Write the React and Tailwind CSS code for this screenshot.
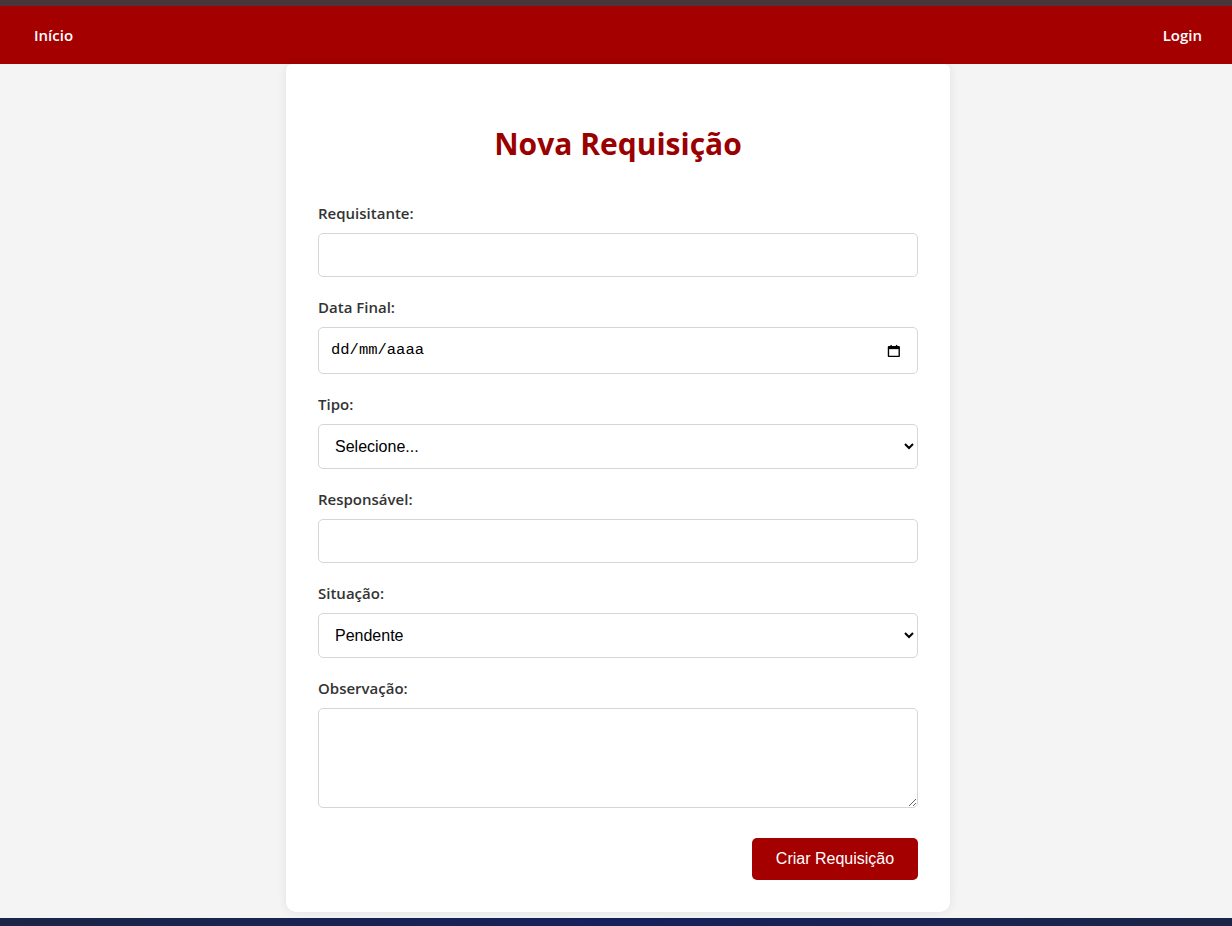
import React, { useState } from 'react';

const labelClass = 'block mb-[10px] text-[15px] leading-5 font-semibold text-[#333333]';
const fieldClass =
  'block w-full rounded-[5px] border border-[#d6d6d6] bg-white px-3 text-[16px] text-black outline-none';

function Field({ label, children }) {
  return (
    <div className="mb-5">
      <label className={labelClass}>{label}</label>
      {children}
    </div>
  );
}

function CalendarIcon() {
  return (
    <svg width="14" height="14" viewBox="0 0 14 14" fill="none" className="text-black">
      <rect x="1.5" y="2.5" width="11" height="10" rx="0.5" stroke="currentColor" strokeWidth="1.4" />
      <rect x="1.5" y="2.5" width="11" height="2.6" fill="currentColor" />
      <rect x="3.5" y="0.8" width="1.4" height="2.4" fill="currentColor" />
      <rect x="9.1" y="0.8" width="1.4" height="2.4" fill="currentColor" />
    </svg>
  );
}

export default function App() {
  const [form, setForm] = useState({
    requisitante: '',
    dataFinal: '',
    tipo: '',
    responsavel: '',
    situacao: 'Pendente',
    observacao: '',
  });

  const update = (key) => (e) => setForm({ ...form, [key]: e.target.value });

  return (
    <div className="bg-[#f4f4f4] font-['Open_Sans','Noto_Sans',sans-serif]">
      <div className="h-[6px] bg-[#4a3538]" />
      <nav className="flex h-[58px] items-center justify-between bg-[#a40000] pl-[34px] pr-[30px]">
        <a className="text-[15px] font-semibold text-white">Início</a>
        <a className="text-[15px] font-semibold text-white">Login</a>
      </nav>

      <main className="flex justify-center pb-[6px] pl-1">
        <div className="w-[664px] rounded-b-[10px] rounded-t-[6px] bg-white px-8 pb-8 pt-[60px] shadow-[0_0_10px_rgba(0,0,0,0.08)]">
          <h1 className="mb-[39px] text-center text-[30px] leading-10 font-bold text-[#9b0000]">
            Nova Requisição
          </h1>

          <form onSubmit={(e) => e.preventDefault()}>
            <Field label="Requisitante:">
              <input
                type="text"
                value={form.requisitante}
                onChange={update('requisitante')}
                className={`${fieldClass} h-[44px]`}
              />
            </Field>

            <Field label="Data Final:">
              <div className="flex h-[47px] w-full items-center justify-between rounded-[5px] border border-[#d6d6d6] bg-white pl-3 pr-[16px]">
                <input
                  type="text"
                  placeholder="dd/mm/aaaa"
                  value={form.dataFinal}
                  onChange={update('dataFinal')}
                  className="w-full bg-transparent font-['Liberation_Mono','DejaVu_Sans_Mono',monospace] text-[15.5px] text-black placeholder:text-black outline-none"
                />
                <CalendarIcon />
              </div>
            </Field>

            <Field label="Tipo:">
              <select
                value={form.tipo}
                onChange={update('tipo')}
                className={`${fieldClass} h-[45px] font-['Liberation_Sans',Arial,sans-serif]`}
              >
                <option value="">Selecione...</option>
                <option value="material">Material</option>
                <option value="servico">Serviço</option>
              </select>
            </Field>

            <Field label="Responsável:">
              <input
                type="text"
                value={form.responsavel}
                onChange={update('responsavel')}
                className={`${fieldClass} h-[44px]`}
              />
            </Field>

            <Field label="Situação:">
              <select
                value={form.situacao}
                onChange={update('situacao')}
                className={`${fieldClass} h-[45px] font-['Liberation_Sans',Arial,sans-serif]`}
              >
                <option value="Pendente">Pendente</option>
                <option value="Em andamento">Em andamento</option>
                <option value="Concluída">Concluída</option>
              </select>
            </Field>

            <div className="mb-[30px]">
              <label className={labelClass}>Observação:</label>
              <textarea
                value={form.observacao}
                onChange={update('observacao')}
                className={`${fieldClass} h-[100px] py-2`}
              />
            </div>

            <div className="flex justify-end">
              <button
                type="submit"
                className="h-[42px] w-[166px] rounded-[5px] bg-[#a40000] font-['Liberation_Sans',Arial,sans-serif] text-[16px] text-white"
              >
                Criar Requisição
              </button>
            </div>
          </form>
        </div>
      </main>

      <footer className="h-[9px] bg-gradient-to-r from-[#1b2547] via-[#16215c] to-[#1b2547]" />
    </div>
  );
}
